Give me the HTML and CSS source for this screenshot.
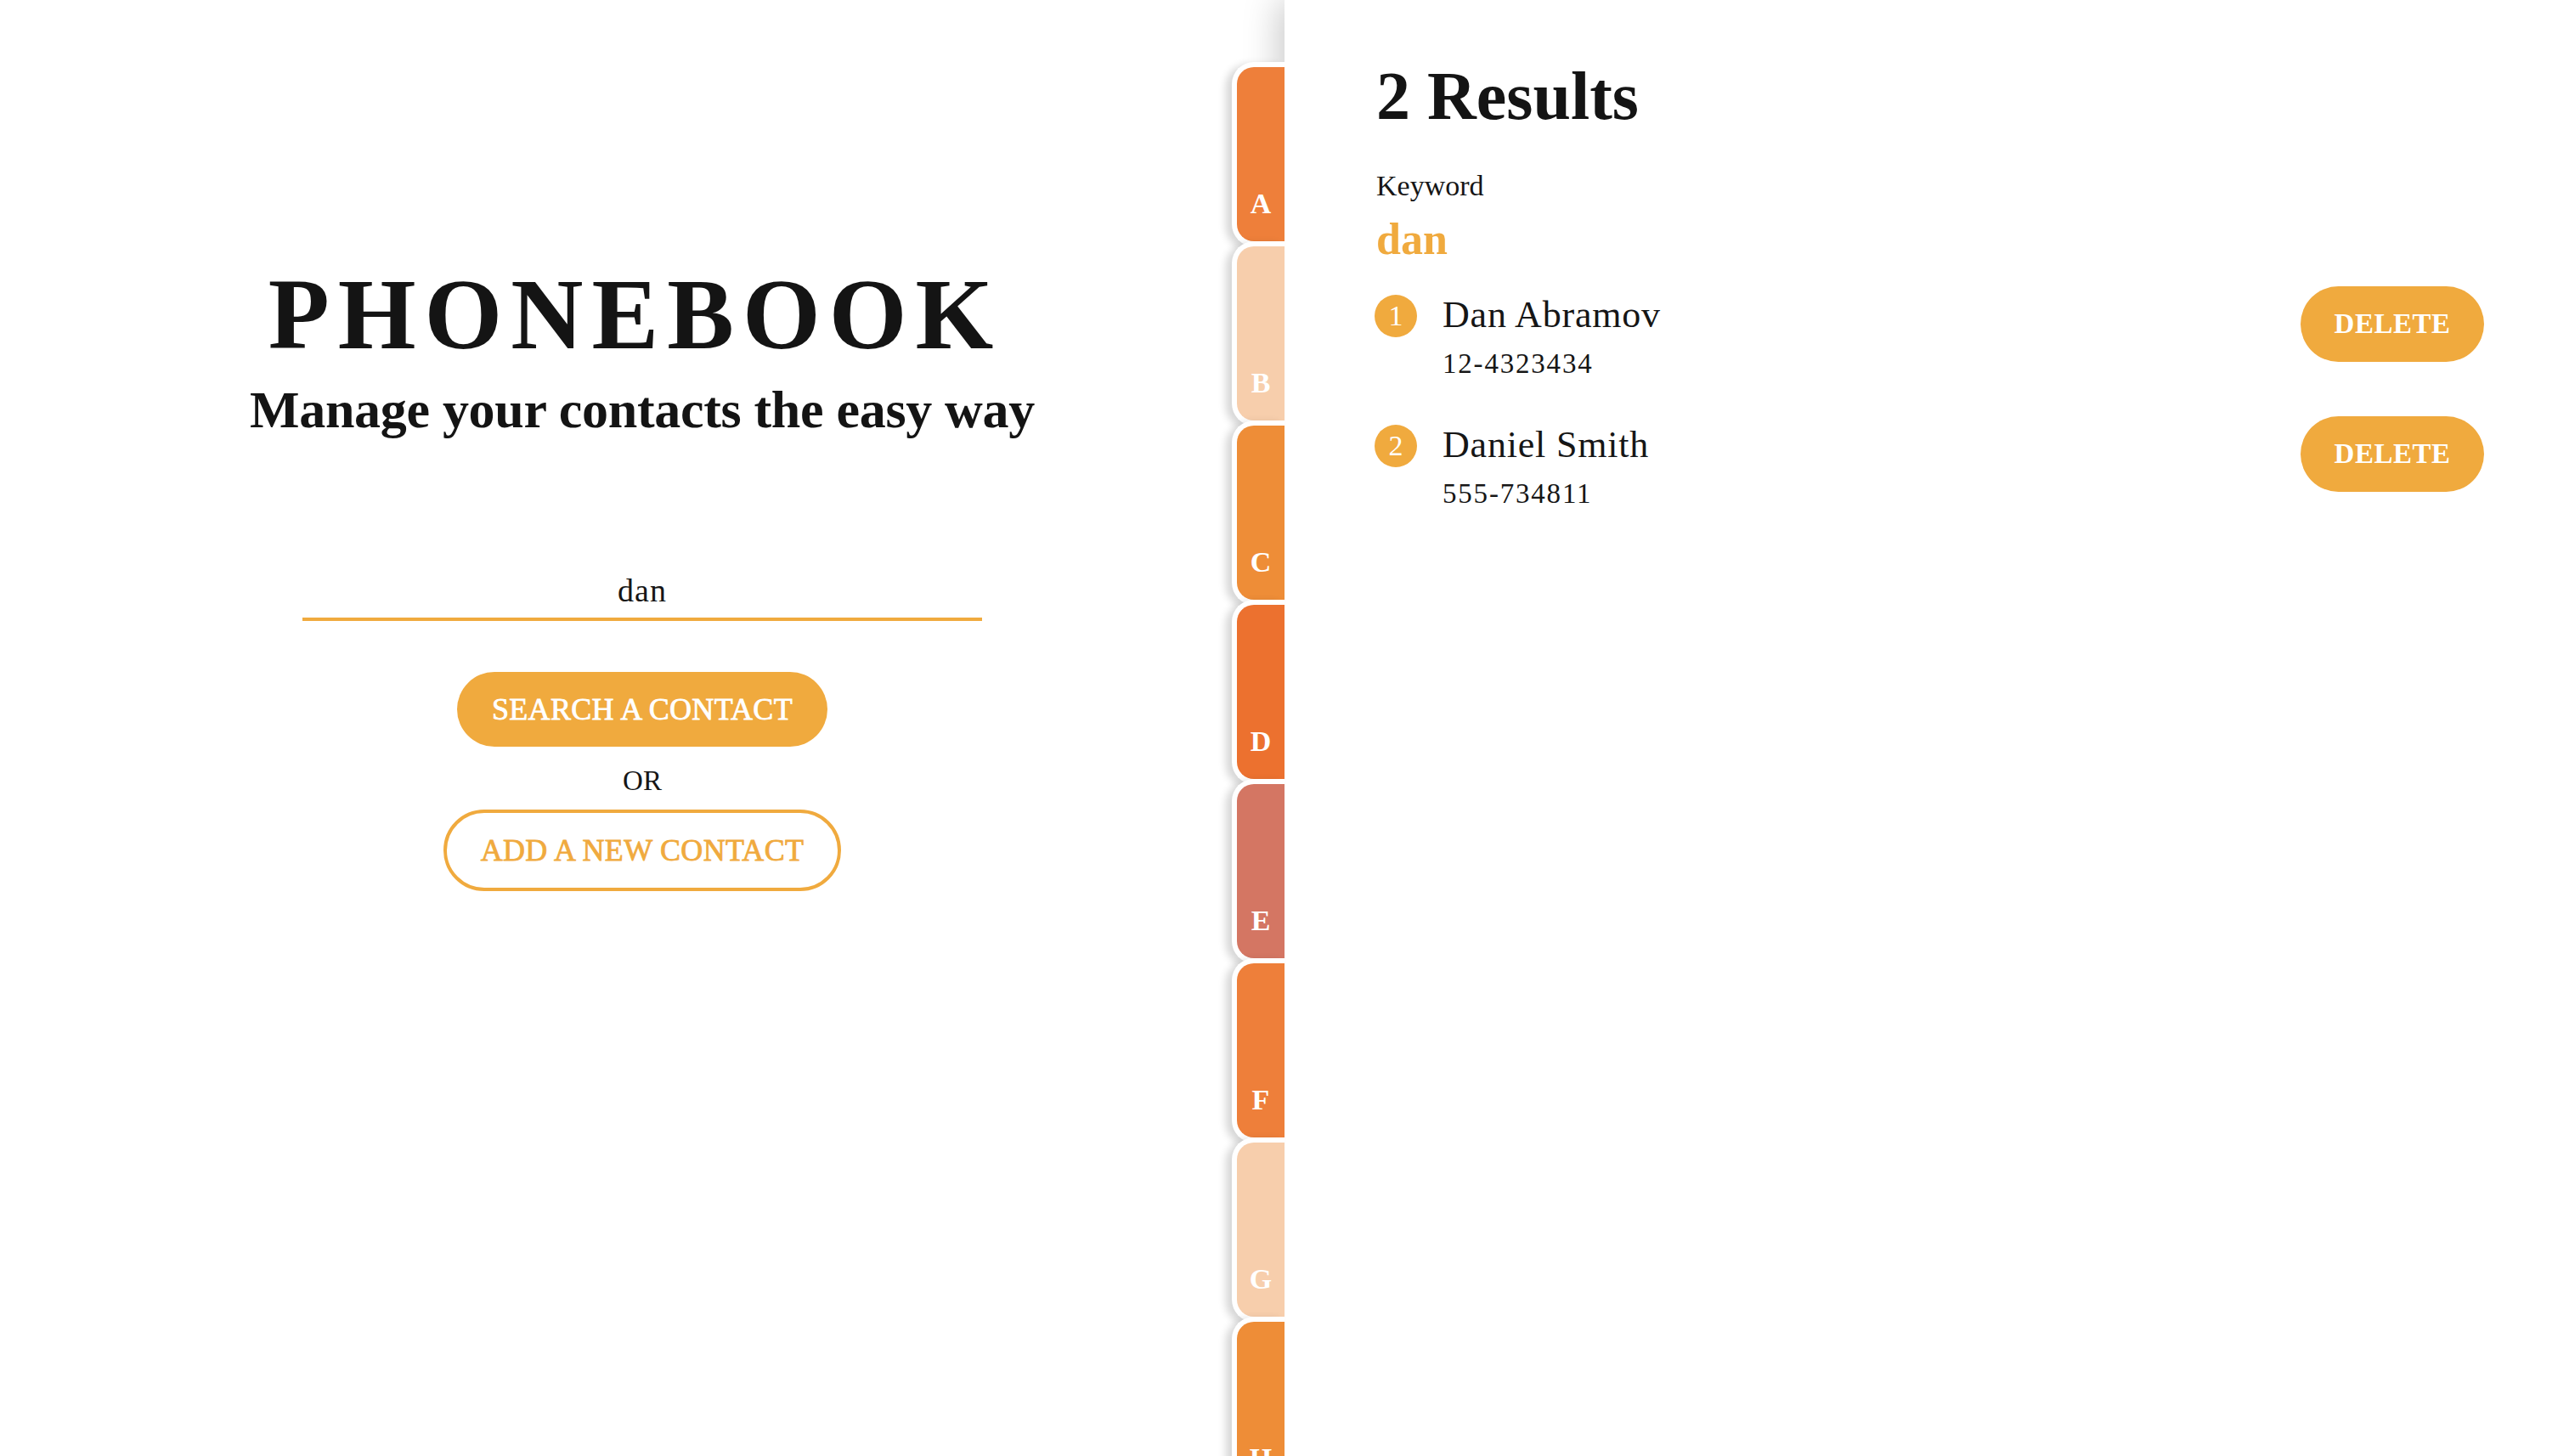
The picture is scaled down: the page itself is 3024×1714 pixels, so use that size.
FILE: index.html
```html
<!DOCTYPE html>
<html lang="en">
<head>
<meta charset="utf-8">
<title>Phonebook</title>
<link rel="stylesheet" href="styles.css">
</head>
<body>
<main class="app">
  <section class="intro">
    <h1 class="brand">PHONEBOOK</h1>
    <p class="tagline">Manage your contacts the easy way</p>
    <div class="search">
      <input class="search-input" type="text" value="dan">
    </div>
    <button class="btn btn-solid" type="button">SEARCH A CONTACT</button>
    <span class="or">OR</span>
    <button class="btn btn-outline" type="button">ADD A NEW CONTACT</button>
  </section>

  <section class="book">
    <nav class="tabs">
      <a class="tab tab-a">A</a>
      <a class="tab tab-b">B</a>
      <a class="tab tab-c">C</a>
      <a class="tab tab-d">D</a>
      <a class="tab tab-e">E</a>
      <a class="tab tab-a">F</a>
      <a class="tab tab-b">G</a>
      <a class="tab tab-c">H</a>
    </nav>

    <h2 class="results-title">2 Results</h2>
    <div class="keyword-label">Keyword</div>
    <div class="keyword">dan</div>

    <ul class="contacts">
      <li class="contact">
        <span class="num">1</span>
        <div class="info">
          <div class="name">Dan Abramov</div>
          <div class="phone">12-4323434</div>
        </div>
        <button class="delete" type="button">DELETE</button>
      </li>
      <li class="contact">
        <span class="num">2</span>
        <div class="info">
          <div class="name">Daniel Smith</div>
          <div class="phone">555-734811</div>
        </div>
        <button class="delete" type="button">DELETE</button>
      </li>
    </ul>
  </section>
</main>
</body>
</html>
```

FILE: styles.css
```css
* { box-sizing: border-box; }

html, body {
  margin: 0;
  padding: 0;
  background: #ffffff;
}

body {
  font-family: "Liberation Serif", "Times New Roman", serif;
  color: #161616;
}

.app {
  display: flex;
  width: 3024px;
  height: 1714px;
  overflow: hidden;
}

/* ---------- left intro ---------- */
.intro {
  width: 1512px;
  flex: 0 0 1512px;
  display: flex;
  flex-direction: column;
  align-items: center;
  padding-top: 311px;
}

.brand {
  margin: 0;
  font-size: 118px;
  line-height: 120px;
  font-weight: 700;
  letter-spacing: 10px;
  padding-right: 17px;
  color: #141414;
}

.tagline {
  margin: 16px 0 0;
  font-size: 62px;
  line-height: 70px;
  font-weight: 700;
  color: #141414;
  letter-spacing: -0.3px;
}

.search {
  margin-top: 154px;
  width: 800px;
  border-bottom: 4px solid #f0aa3e;
}

.search-input {
  display: block;
  width: 100%;
  border: 0;
  outline: 0;
  background: transparent;
  text-align: center;
  font-family: "Liberation Serif", "Times New Roman", serif;
  font-size: 38px;
  line-height: 48px;
  height: 48px;
  letter-spacing: 1px;
  color: #161616;
  padding: 0;
  margin-bottom: 8px;
}

.btn {
  font-family: "Liberation Serif", "Times New Roman", serif;
  font-size: 36px;
  letter-spacing: 0.3px;
  -webkit-text-stroke: 0.8px currentColor;
  border-radius: 60px;
  cursor: pointer;
}

.btn-solid {
  margin-top: 60px;
  width: 436px;
  height: 88px;
  border: 0;
  background: #f0aa3e;
  color: #ffffff;
}

.or {
  margin-top: 20px;
  font-size: 33px;
  line-height: 40px;
  color: #161616;
}

.btn-outline {
  margin-top: 14px;
  width: 468px;
  height: 96px;
  border: 4px solid #f0aa3e;
  background: #ffffff;
  color: #f0aa3e;
}

/* ---------- right book ---------- */
.book {
  position: relative;
  flex: 1;
  background: #ffffff;
  box-shadow: -6px 0 40px rgba(0, 0, 0, 0.22);
  padding: 73px 100px 0 108px;
}

.tabs {
  position: absolute;
  right: 100%;
  top: 73px;
  display: flex;
  flex-direction: column;
}

.tab {
  display: flex;
  align-items: flex-end;
  justify-content: center;
  width: 62px;
  height: 217px;
  border: 6px solid #ffffff;
  border-right: 0;
  border-radius: 26px 0 0 26px;
  padding-bottom: 27px;
  font-size: 34px;
  line-height: 34px;
  font-weight: 700;
  color: #ffffff;
  box-shadow: -7px 3px 10px rgba(0, 0, 0, 0.16);
}

.tab + .tab { margin-top: -6px; }

.tab-a { background: #ee7f3a; }
.tab-b { background: #f7ceac; }
.tab-c { background: #ee8d37; }
.tab-d { background: #ec712f; }
.tab-e { background: #d47663; }

.results-title {
  margin: 0;
  font-size: 80px;
  line-height: 80px;
  font-weight: 700;
  color: #141414;
}

.keyword-label {
  margin-top: 46px;
  font-size: 34px;
  line-height: 40px;
}

.keyword {
  margin-top: 15px;
  font-size: 52px;
  line-height: 56px;
  font-weight: 700;
  color: #f0aa3e;
}

.contacts {
  list-style: none;
  margin: 37px 0 0;
  padding: 0;
}

.contact {
  display: flex;
  align-items: flex-start;
}

.contact + .contact { margin-top: 52px; }

.num {
  flex: 0 0 50px;
  width: 50px;
  height: 50px;
  border-radius: 50%;
  background: #f0aa3e;
  color: #ffffff;
  display: flex;
  align-items: center;
  justify-content: center;
  font-size: 34px;
  line-height: 1;
  margin-left: -2px;
}

.info {
  flex: 1;
  margin-left: 30px;
}

.name {
  font-size: 44px;
  line-height: 48px;
  letter-spacing: 0.8px;
}

.phone {
  margin-top: 13px;
  font-size: 33px;
  line-height: 40px;
  letter-spacing: 1.8px;
}

.delete {
  margin-top: -10px;
  width: 216px;
  height: 89px;
  border: 0;
  border-radius: 45px;
  background: #f0aa3e;
  color: #ffffff;
  font-family: "Liberation Serif", "Times New Roman", serif;
  font-size: 33px;
  font-weight: 700;
  letter-spacing: 0.5px;
  cursor: pointer;
}
```
